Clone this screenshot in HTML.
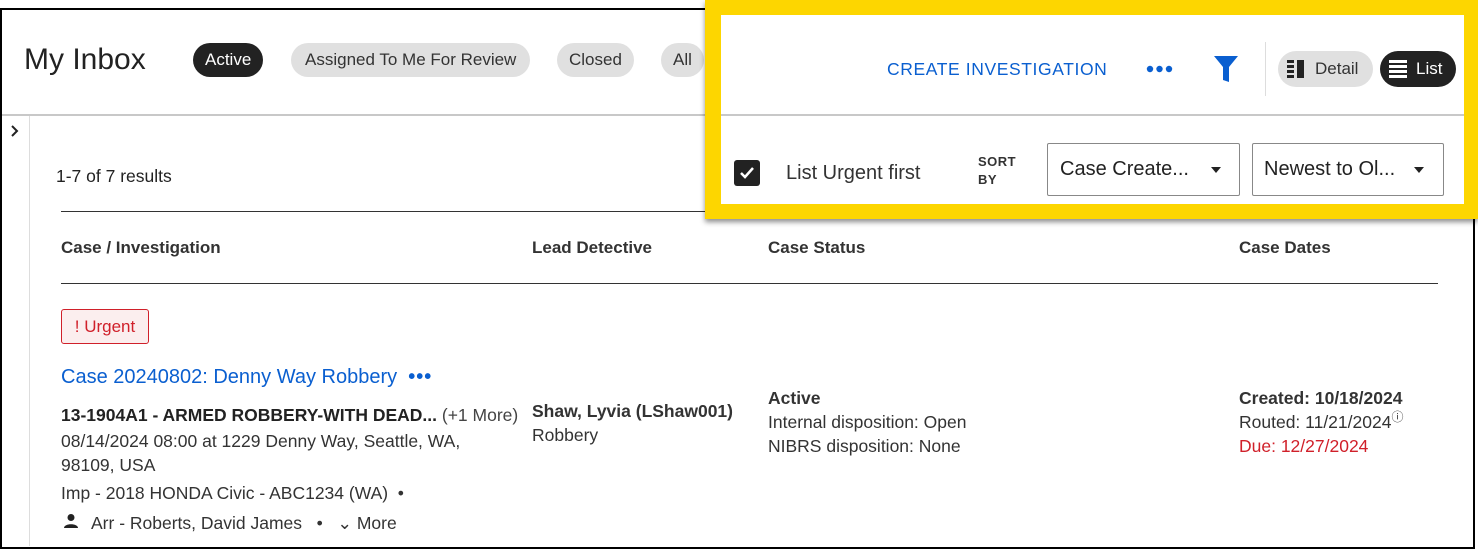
<!DOCTYPE html>
<html><head><meta charset="utf-8"><style>
*{margin:0;padding:0;box-sizing:border-box}
body{width:1478px;height:549px;background:#fff;position:relative;overflow:hidden;font-family:"Liberation Sans",sans-serif;color:#222}
.a{position:absolute;white-space:nowrap}
.pill{position:absolute;top:43px;height:34px;border-radius:17px;background:#e0e0e0;font-size:17px;line-height:34px;padding:0 12px;color:#333}
</style></head><body>
<div class="a" style="left:0;top:8px;width:1475px;height:541px;border:2px solid #000"></div>
<div class="a" style="left:2px;top:114px;width:1470px;height:2px;background:#c8c8c8"></div>
<div class="a" style="left:29px;top:116px;width:1px;height:430px;background:#ddd"></div>
<svg class="a" style="left:9px;top:124px" width="12" height="14"><path d="M3 2l5 5-5 5" stroke="#222" stroke-width="2" fill="none"/></svg>
<div class="a" style="left:24px;top:43px;font-size:30px;color:#222">My Inbox</div>
<div class="pill" style="left:193px;background:#222;color:#fff">Active</div>
<div class="pill" style="left:291px;padding:0 14px">Assigned To Me For Review</div>
<div class="pill" style="left:557px">Closed</div>
<div class="pill" style="left:661px">All</div>
<div class="a" style="left:56px;top:166px;font-size:17.5px">1-7 of 7 results</div>
<div class="a" style="left:61px;top:211px;width:1377px;height:1px;background:#333"></div>
<div class="a" style="left:61px;top:238px;font-size:17px;font-weight:bold;color:#333">Case / Investigation</div>
<div class="a" style="left:532px;top:238px;font-size:17px;font-weight:bold;color:#333">Lead Detective</div>
<div class="a" style="left:768px;top:238px;font-size:17px;font-weight:bold;color:#333">Case Status</div>
<div class="a" style="left:1239px;top:238px;font-size:17px;font-weight:bold;color:#333">Case Dates</div>
<div class="a" style="left:61px;top:283px;width:1377px;height:1px;background:#333"></div>
<div class="a" style="left:61px;top:309px;width:88px;height:35px;border:1px solid #d0202a;border-radius:3px;background:#fbeeee;color:#d0202a;font-size:17px;line-height:33px;text-align:center">! Urgent</div>
<div class="a" style="left:61px;top:366px;font-size:20px;color:#0a5fd0">Case 20240802: Denny Way Robbery &nbsp;<b style="letter-spacing:1px">•••</b></div>
<div class="a" style="left:61px;top:405px;font-size:17.5px"><b>13-1904A1 - ARMED ROBBERY-WITH DEAD...</b> <span style="color:#444">(+1 More)</span></div>
<div class="a" style="left:61px;top:429px;font-size:17.5px;line-height:24px;color:#333">08/14/2024 08:00 at 1229 Denny Way, Seattle, WA,<br>98109, USA</div>
<div class="a" style="left:61px;top:483px;font-size:17.5px;color:#333">Imp - 2018 HONDA Civic - ABC1234 (WA) &nbsp;•</div>
<svg class="a" style="left:63px;top:513px" width="16" height="16"><circle cx="8" cy="4.5" r="3.5" fill="#222"/><path d="M1 15c0-5 14-5 14 0z" fill="#222"/></svg>
<div class="a" style="left:91px;top:513px;font-size:17.5px;color:#333">Arr - Roberts, David James &nbsp;&nbsp;• &nbsp;&nbsp;⌄ More</div>
<div class="a" style="left:532px;top:399px;font-size:17.5px;line-height:24px;color:#333"><b>Shaw, Lyvia (LShaw001)</b><br>Robbery</div>
<div class="a" style="left:768px;top:386px;font-size:17.5px;line-height:24px;color:#333"><b>Active</b><br>Internal disposition: Open<br>NIBRS disposition: None</div>
<div class="a" style="left:1239px;top:386px;font-size:17.5px;line-height:24px;color:#333"><b>Created: 10/18/2024</b><br>Routed: 11/21/2024<span style="display:inline-block;font-size:12px;vertical-align:top;line-height:14px">ⓘ</span><br><span style="color:#d0202a">Due: 12/27/2024</span></div>
<!-- yellow highlight -->
<div class="a" style="left:705px;top:0;width:773px;height:219px;background:#fdd600;box-shadow:0 3px 5px rgba(0,0,0,.45)"></div>
<div class="a" style="left:721px;top:15px;width:743px;height:189px;background:#fff"></div>
<div class="a" style="left:721px;top:114px;width:743px;height:2px;background:#c8c8c8"></div>
<div class="a" style="left:887px;top:59px;font-size:17.5px;color:#0a5fd0;letter-spacing:.6px">CREATE INVESTIGATION</div>
<svg class="a" style="left:1146px;top:64px" width="28" height="10"><g fill="#0a5fd0"><circle cx="4" cy="5" r="3.2"/><circle cx="13.5" cy="5" r="3.2"/><circle cx="23" cy="5" r="3.2"/></g></svg>
<svg class="a" style="left:1213px;top:55px" width="26" height="28"><path d="M1 1h24l-9 11v15l-6-2V12z" fill="#0a5fd0"/></svg>
<div class="a" style="left:1265px;top:42px;width:1px;height:54px;background:#ddd"></div>
<div class="a" style="left:1278px;top:51px;width:95px;height:36px;border-radius:18px;background:#e0e0e0"></div>
<svg class="a" style="left:1287px;top:60px" width="20" height="18"><g fill="#222"><rect x="0" y="0" width="7" height="3"/><rect x="0" y="5" width="7" height="3"/><rect x="0" y="10" width="7" height="3"/><rect x="0" y="15" width="7" height="3"/><rect x="10" y="0" width="7" height="18"/></g></svg>
<div class="a" style="left:1315px;top:59px;font-size:17px;color:#333">Detail</div>
<div class="a" style="left:1380px;top:51px;width:76px;height:36px;border-radius:18px;background:#222"></div>
<svg class="a" style="left:1389px;top:60px" width="18" height="18"><g fill="#fff"><rect y="0" width="18" height="3"/><rect y="5" width="18" height="3"/><rect y="10" width="18" height="3"/><rect y="15" width="18" height="3"/></g></svg>
<div class="a" style="left:1416px;top:59px;font-size:17px;color:#fff">List</div>
<div class="a" style="left:734px;top:160px;width:26px;height:26px;background:#222;border-radius:3px"></div>
<svg class="a" style="left:737px;top:163px" width="20" height="20"><path d="M4 10l4 4 8-9" stroke="#fff" stroke-width="2.5" fill="none"/></svg>
<div class="a" style="left:786px;top:162px;font-size:20px;color:#333">List Urgent first</div>
<div class="a" style="left:978px;top:153px;font-size:13px;line-height:18px;font-weight:bold;color:#333;letter-spacing:.5px">SORT<br>BY</div>
<div class="a" style="left:1047px;top:143px;width:193px;height:53px;border:1px solid #888;border-radius:2px"></div>
<div class="a" style="left:1060px;top:158px;font-size:20px;color:#222">Case Create...</div>
<svg class="a" style="left:1210px;top:166px" width="12" height="8"><path d="M1 1h10l-5 6z" fill="#222"/></svg>
<div class="a" style="left:1252px;top:143px;width:192px;height:53px;border:1px solid #888;border-radius:2px"></div>
<div class="a" style="left:1264px;top:158px;font-size:20px;color:#222">Newest to Ol...</div>
<svg class="a" style="left:1413px;top:166px" width="12" height="8"><path d="M1 1h10l-5 6z" fill="#222"/></svg>
</body></html>
